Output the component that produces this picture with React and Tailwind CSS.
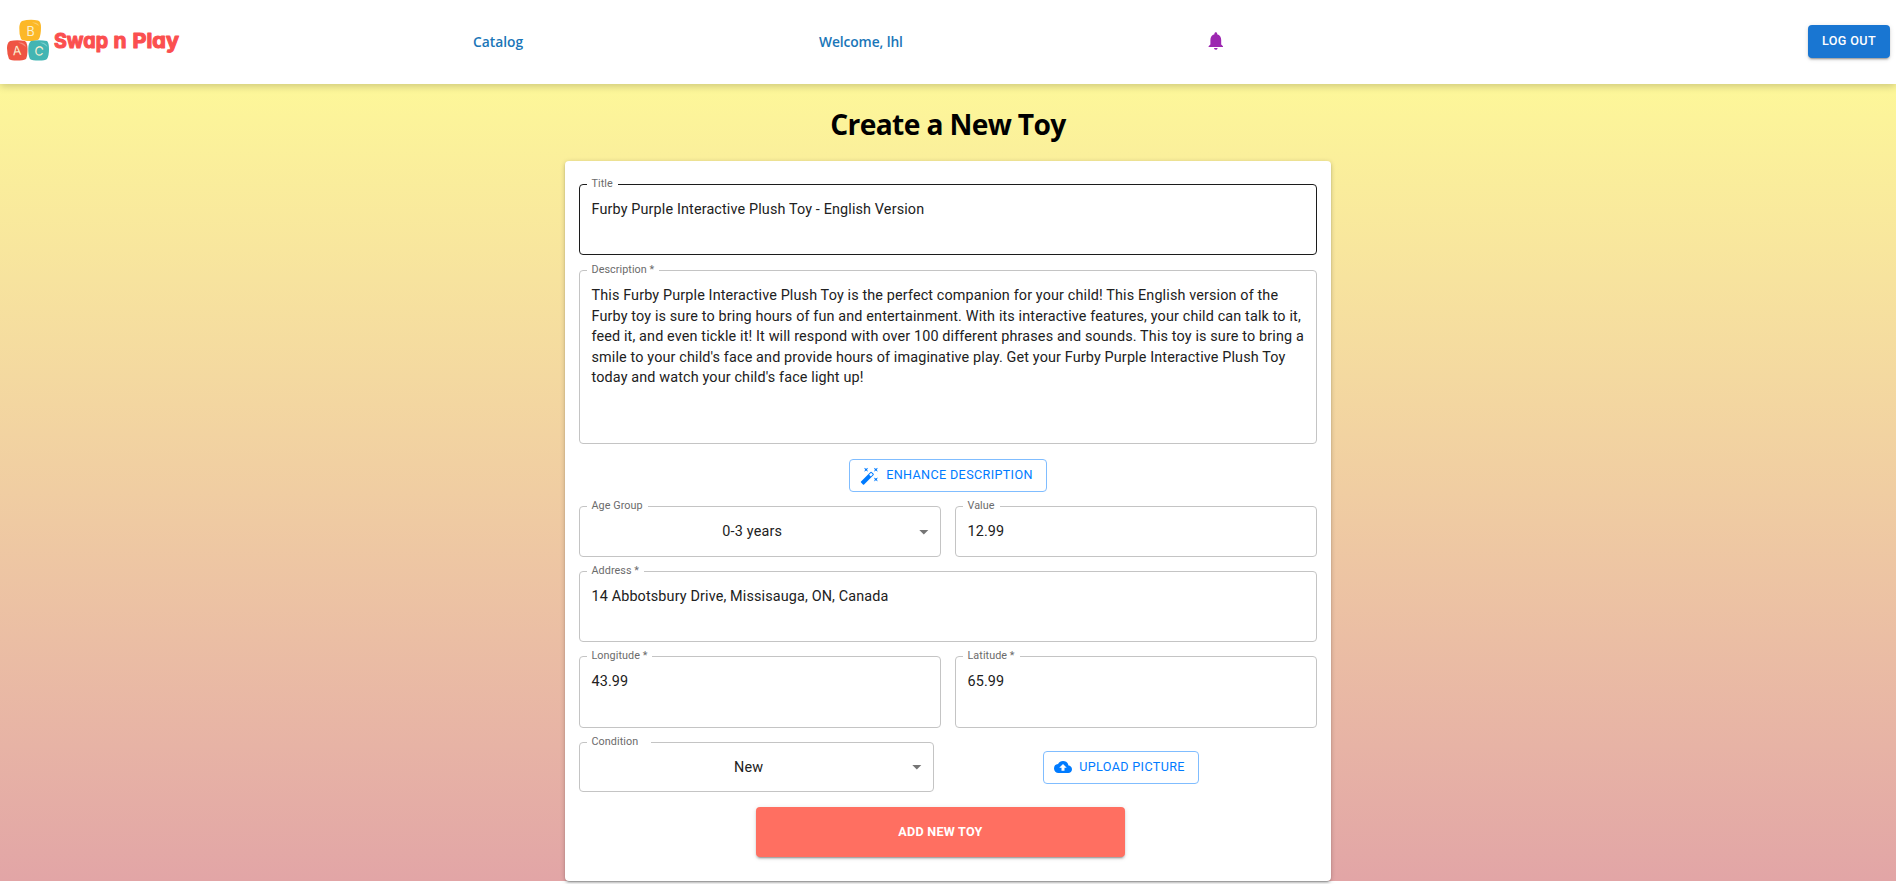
import React from "react";
import {
  MdNotifications,
  MdAutoFixHigh,
  MdCloudUpload,
  MdArrowDropDown,
} from "react-icons/md";

function Logo() {
  return (
    <svg width="190" height="50" viewBox="0 0 190 50" className="mt-[2px] block" role="img" aria-label="Swap n Play">
      <path d="M22 4Q30 2 38 3.500Q41 4.500 41 10.500Q41 18 39 22Q37 24 30 24Q23 24 21 22Q19 17 19.300 11Q19.500 5.500 22 4Z" fill="#fcb827" />
      <path d="M32 5.500Q38 5 39 9Q36 6.500 32 5.500Z" fill="#fdd06d" />
      <path d="M10 24Q17 22.500 25 24Q27.500 26 27.500 32Q27.500 39 26 42Q23 43.500 17 43.500Q11 43.500 9 42Q7 37 7 31Q7 26 10 24Z" fill="#ef5443" />
      <path d="M18 25.500Q25 25 26 30Q22 26.500 18 25.500Z" fill="#f58a7c" />
      <path d="M31 24Q39 22.500 47 24Q49 26 49 32Q49 39 47 42Q45 43.500 39 43.500Q32 43.500 30 42Q28 38 28.300 31Q28.500 26 31 24Z" fill="#43b5b3" />
      <path d="M40 25.500Q46 25 47.500 30Q44 26.500 40 25.500Z" fill="#7fd0cd" />
      <g fill="#fbf0d0" fontFamily="Inter, sans-serif" fontSize="12.500" textAnchor="middle">
        <text x="30.500" y="19">B</text>
        <text x="17" y="38" transform="rotate(-4 17 34)">A</text>
        <text x="39" y="38.500" transform="rotate(6 39 35)">C</text>
      </g>
      <g
        fill="#fb4f4f"
        stroke="#fb4f4f"
        strokeWidth="1.100"
        strokeLinejoin="round"
        fontFamily="Inter, sans-serif"
        fontSize="20.500"
        fontWeight="700"
        className="[font-feature-settings:'cv11']"
      >
        <text x="54" y="31" textLength="54" lengthAdjust="spacingAndGlyphs">Swap</text>
        <text x="113.500" y="31" textLength="13" lengthAdjust="spacingAndGlyphs">n</text>
        <text x="132.500" y="31" textLength="46.500" lengthAdjust="spacingAndGlyphs">Play</text>
      </g>
    </svg>
  );
}

function Field({ label, className = "", notch = "", active = false, children }) {
  return (
    <div className={`relative rounded-[4px] border ${active ? "border-[#1c1c1c]" : "border-[#c4c4c4]"} ${className}`}>
      <span className={`absolute left-[7px] top-[-9px] h-[16px] whitespace-nowrap bg-white pl-[4.500px] text-[10.8px] leading-[16px] tracking-[0.06px] text-[#6b6b6b] ${notch}`}>
        {label}
      </span>
      {children}
    </div>
  );
}

function Value({ children }) {
  return (
    <div className="whitespace-nowrap pl-[11.500px] pt-[15px] text-[14.4px] leading-[20.6px] tracking-[0.135px] text-[#212121]">
      {children}
    </div>
  );
}

function Select({ children }) {
  return (
    <div className="flex h-full items-center text-[14.4px] tracking-[0.2px] text-[#212121]">
      <span className="flex-1 pl-[11px] pt-px text-center">{children}</span>
      <MdArrowDropDown className="mr-[5px] size-[21.6px] text-[#757575]" />
    </div>
  );
}

function OutlineButton({ icon, className = "", children }) {
  return (
    <button className={`flex h-[33px] items-center justify-center rounded-[4px] border border-[#80bdff] pr-[3px] text-[12.6px] tracking-[0.36px] text-[#007bff] ${className}`}>
      {icon}
      {children}
    </button>
  );
}

export default function App() {
  return (
    <div className="min-h-[884px] bg-white font-['Roboto',sans-serif]">
      <header className="relative grid h-[84px] grid-cols-[473px_346px_384px_1fr_auto] items-center bg-white pb-[2px] pr-[6px] shadow-[0_2px_8px_rgba(0,0,0,0.2)]">
        <Logo />
        <a className="pt-[2px] font-['Open_Sans',sans-serif] text-[13.8px] font-semibold text-[#1a76b8]">Catalog</a>
        <a className="pt-[2px] font-['Open_Sans',sans-serif] text-[13.8px] font-semibold tracking-[-0.1px] text-[#1a76b8]">Welcome, lhl</a>
        <MdNotifications className="ml-[2px] size-[21.6px] text-[#9c27b0]" />
        <button className="h-[33px] w-[82px] rounded-[4px] bg-[#1976d2] text-[12.6px] font-medium tracking-[0.36px] text-white shadow-[0_3px_1px_-2px_rgba(0,0,0,0.2),0_2px_2px_0_rgba(0,0,0,0.14),0_1px_5px_0_rgba(0,0,0,0.12)]">
          LOG OUT
        </button>
      </header>

      <main className="flex h-[797px] flex-col items-center bg-linear-to-b from-[#fdf799] to-[#e2a5a6]">
        <h1 className="flex h-[77px] items-center pt-[3px] font-['Open_Sans',sans-serif] text-[28.2px] font-bold tracking-[-0.65px] text-black">
          Create a New Toy
        </h1>

        <form className="flex h-[720px] w-[766px] flex-col rounded-[4px] bg-white px-[14px] pt-[23px] shadow-[0_3px_1px_-2px_rgba(0,0,0,0.2),0_2px_2px_0_rgba(0,0,0,0.14),0_1px_5px_0_rgba(0,0,0,0.2)]">
          <Field label="Title" active className="h-[71px]" notch="w-[31px]">
            <Value>Furby Purple Interactive Plush Toy - English Version</Value>
          </Field>

          <Field label="Description *" className="mt-[15px] h-[174px]" notch="w-[72px]">
            <Value>
              This Furby Purple Interactive Plush Toy is the perfect companion for your child! This English version of the
              <br />
              Furby toy is sure to bring hours of fun and entertainment. With its interactive features, your child can talk to it,
              <br />
              feed it, and even tickle it! It will respond with over 100 different phrases and sounds. This toy is sure to bring a
              <br />
              smile to your child's face and provide hours of imaginative play. Get your Furby Purple Interactive Plush Toy
              <br />
              today and watch your child's face light up!
            </Value>
          </Field>

          <OutlineButton className="mt-[15px] w-[198px] self-center" icon={<MdAutoFixHigh className="mr-[6.500px] size-[19.500px]" />}>
            ENHANCE DESCRIPTION
          </OutlineButton>

          <div className="mt-[14px] grid grid-cols-2 gap-[14px]">
            <Field label="Age Group" className="h-[51px]" notch="w-[61px]">
              <Select>0-3 years</Select>
            </Field>
            <Field label="Value" className="h-[51px]" notch="w-[37px]">
              <Value>12.99</Value>
            </Field>
          </div>

          <Field label="Address *" className="mt-[14px] h-[71px]" notch="w-[57px]">
            <Value>14 Abbotsbury Drive, Missisauga, ON, Canada</Value>
          </Field>

          <div className="mt-[14px] grid grid-cols-2 gap-[14px]">
            <Field label="Longitude *" className="h-[72px]" notch="w-[65px]">
              <Value>43.99</Value>
            </Field>
            <Field label="Latitude *" className="h-[72px]" notch="w-[57px]">
              <Value>65.99</Value>
            </Field>
          </div>

          <div className="mt-[14px] flex items-center">
            <Field label="Condition" className="h-[50px] w-[355px]" notch="w-[64px]">
              <Select>New</Select>
            </Field>
            <OutlineButton className="ml-[109px] w-[156px]" icon={<MdCloudUpload className="mr-[7px] size-[18px]" />}>
              UPLOAD PICTURE
            </OutlineButton>
          </div>

          <button className="ml-[177px] mt-[15px] h-[50px] w-[369px] rounded-[4px] bg-[#ff6f61] text-[12.6px] font-bold tracking-[0.25px] text-white shadow-[0_3px_1px_-2px_rgba(0,0,0,0.2),0_2px_2px_0_rgba(0,0,0,0.14),0_1px_5px_0_rgba(0,0,0,0.12)]">
            ADD NEW TOY
          </button>
        </form>
      </main>
    </div>
  );
}
